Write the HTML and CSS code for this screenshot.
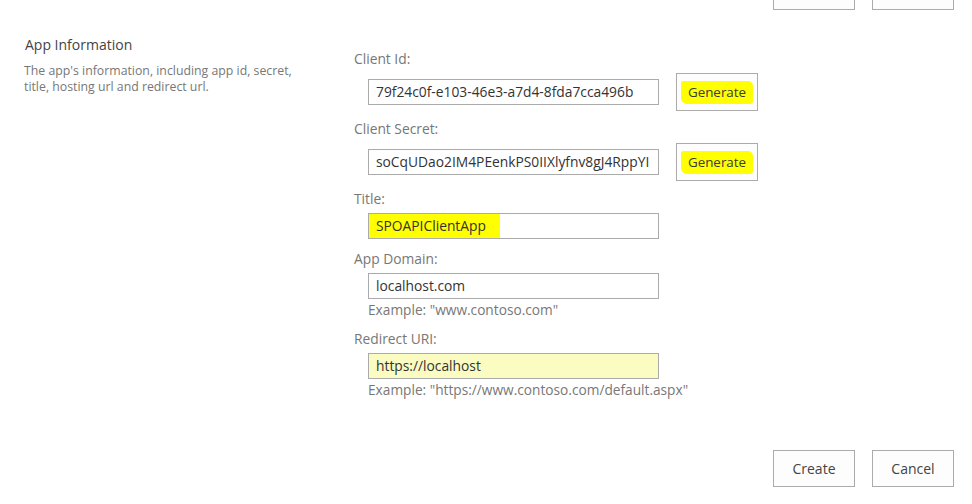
FILE: index.html
```html
<!doctype html>
<html>
<head>
<meta charset="utf-8">
<title>App Information</title>
<link rel="stylesheet" href="styles.css">
</head>
<body>
	<div class="btnRow btnTop">
		<a href="javascript:;" class="btn">OK</a>
		<a href="javascript:;" class="btn">Cancel</a>
	</div>
	<div class="section">
		<div class="sideInfo">
			<h3>App Information</h3>
			<p>The app's information, including app id, secret, title, hosting url and redirect url.</p>
		</div>
		<div class="fields">
			<div class="group grpBtn">
				<div class="label">Client Id:</div>
				<div class="fieldRow">
					<div class="box">79f24c0f-e103-46e3-a7d4-8fda7cca496b</div>
					<a href="javascript:;" class="btn genBtn"><span class="mark">Generate</span></a>
				</div>
			</div>
			<div class="group grpBtn">
				<div class="label">Client Secret:</div>
				<div class="fieldRow">
					<div class="box">soCqUDao2IM4PEenkPS0IIXlyfnv8gJ4RppYI</div>
					<a href="javascript:;" class="btn genBtn"><span class="mark">Generate</span></a>
				</div>
			</div>
			<div class="group">
				<div class="label">Title:</div>
				<div class="fieldRow">
					<div class="box"><span class="mark titleMark">SPOAPIClientApp</span></div>
				</div>
			</div>
			<div class="group">
				<div class="label">App Domain:</div>
				<div class="fieldRow">
					<div class="box">localhost.com</div>
				</div>
				<div class="hint">Example: "www.contoso.com"</div>
			</div>
			<div class="group">
				<div class="label">Redirect URI:</div>
				<div class="fieldRow">
					<div class="box boxFill">https://localhost</div>
				</div>
				<div class="hint">Example: "https://www.contoso.com/default.aspx"</div>
			</div>
		</div>
	</div>
	<div class="btnRow btnBottom">
		<a href="javascript:;" class="btn">Create</a>
		<a href="javascript:;" class="btn">Cancel</a>
	</div>
</body>
</html>
```

FILE: styles.css
```css
body{ margin:0; background:#fff; font-family:"Open Sans","Noto Sans",sans-serif; color:#444; width:972px; height:504px; overflow:hidden;}
.btnRow{ display:flex; justify-content:flex-end; gap:17px; padding-right:18px;}
.btnTop{ margin-top:-27px;}
.btnBottom{ margin-top:41px;}
.btn{ box-sizing:border-box; width:82px; height:37px; border:1px solid #ababab; background:#fdfdfd; color:#444; font-size:14px; text-decoration:none; display:flex; align-items:center; justify-content:center;}
.section{ display:flex; margin-top:25px;}
.sideInfo{ width:354px; box-sizing:border-box; padding-left:25px; padding-right:50px;}
.sideInfo h3{ margin:0; font-size:14px; font-weight:normal; color:#444; line-height:20px;}
.sideInfo p{ margin:8px 0 0 -1px; font-size:12.3px; line-height:16px; color:#777;}
.fields{ display:flex; flex-direction:column; padding-top:14px;}
.group{ margin-bottom:10px;}
.grpBtn{ margin-bottom:8px;}
.label{ font-size:13.8px; color:#777; line-height:20px; height:20px; margin-bottom:4px;}
.fieldRow{ display:flex; align-items:center; gap:17px; margin-left:14px;}
.grpBtn .fieldRow{ height:38px;}
.grpBtn .btn{ height:38px;}
.box{ box-sizing:border-box; width:291px; height:26px; border:1px solid #ababab; background:#fff; padding:0 7px; font-size:13.8px; line-height:24px; color:#333; white-space:nowrap; overflow:hidden;}
.boxFill{ background:#fbfcc1;}
.hint{ margin:2px 0 0 14px; font-size:13.7px; color:#777; line-height:18px;}
.mark{ background:#ffff00; border-radius:2px 5px 3px 6px;}
.genBtn{ font-size:13.4px; padding-top:1px; color:#3a3a3a;}
.genBtn .mark{ padding:2px 7px 3px;}
.titleMark{ margin-left:-12px; padding:6px 14px 6px 12px; border-radius:9px 2px 3px 12px;}
```
